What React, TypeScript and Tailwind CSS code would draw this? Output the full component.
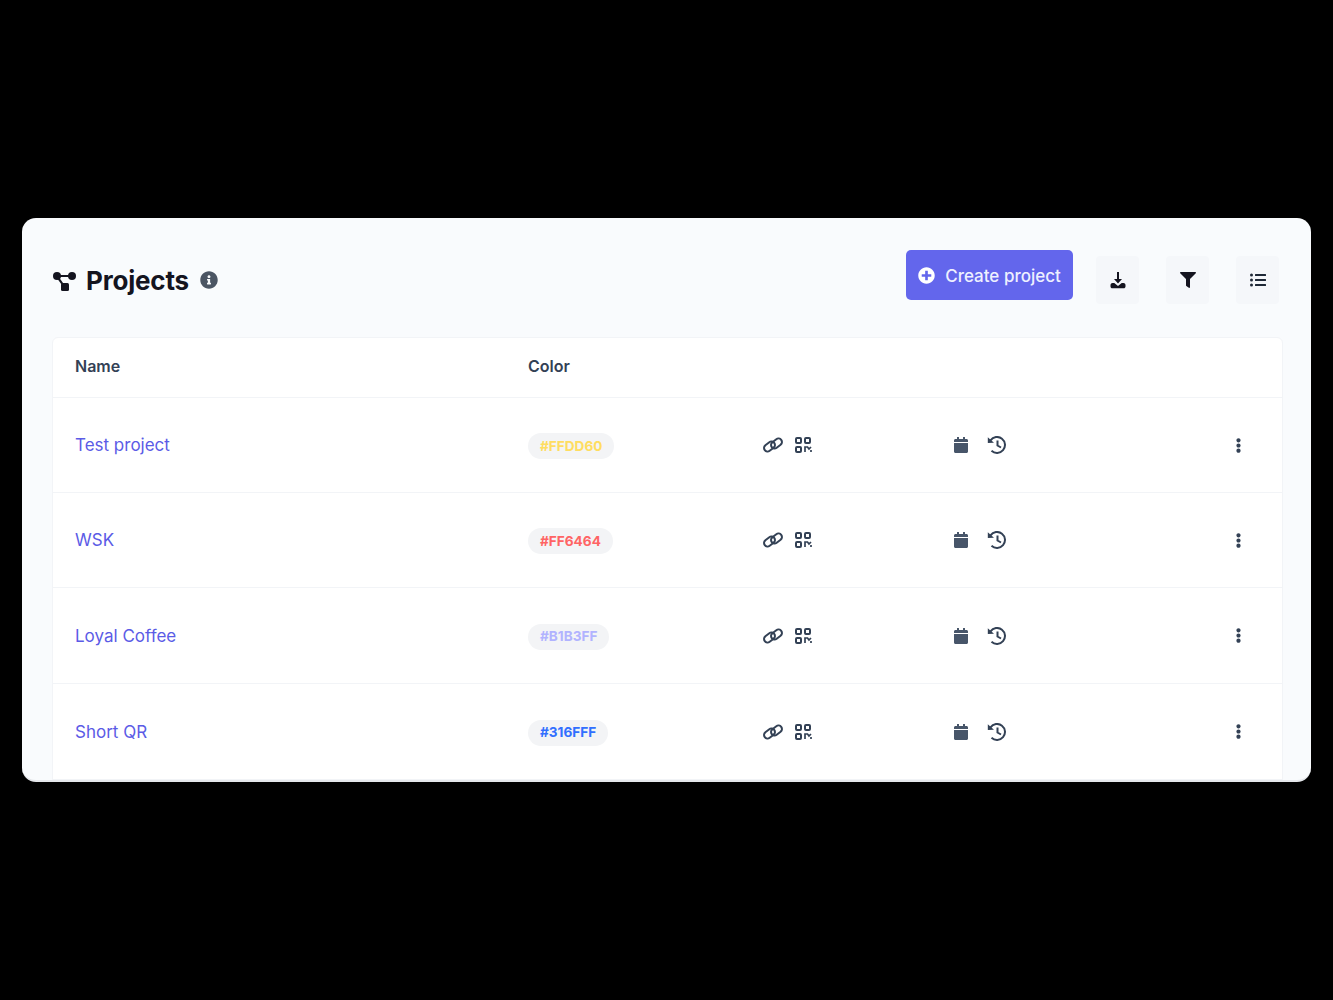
import React from 'react';
import { FaCalendar, FaEllipsisV, FaFilter, FaInfoCircle, FaListUl, FaPlusCircle } from 'react-icons/fa';

const projects = [
  { name: 'Test project', color: '#FFDD60', text: 'text-[#FFDD60]', height: 'h-[95px]' },
  { name: 'WSK', color: '#FF6464', text: 'text-[#FF6464]', height: 'h-[95px]' },
  { name: 'Loyal Coffee', color: '#B1B3FF', text: 'text-[#B1B3FF]', height: 'h-[96px]' },
  { name: 'Short QR', color: '#316FFF', text: 'text-[#316FFF]', height: 'h-[96px]' },
];

const ProjectsIcon = () => (
  <svg width="24" height="22" viewBox="0 0 24 22" fill="#14141f">
    <circle cx="5" cy="6" r="4" />
    <circle cx="20" cy="6" r="4" />
    <rect x="9" y="13" width="8" height="8" rx="1.500" />
    <path d="M5 5h15v2H5z" />
    <path d="M6 6l6.500 9-1.700 1.200-6.500-9z" />
  </svg>
);

const DownloadIcon = () => (
  <svg width="16" height="17" viewBox="0 0 16 17" fill="#14141f">
    <path d="M7 0h2v7h3l-4 4.400L4 7h3z" />
    <path d="M0.500 13c0-1.200 1-2 2-2h1.800L8 14l3.700-3h1.800c1 0 2 .8 2 2v1.500c0 1-.8 1.800-1.800 1.800H2.300c-1 0-1.800-.8-1.800-1.800z" />
  </svg>
);

const LinkIcon = () => (
  <svg width="22" height="16" viewBox="0 0 22 16" fill="none" stroke="#334155" strokeWidth="2">
    <rect x="1.500" y="6" width="12" height="7" rx="3.500" transform="rotate(-38 7.500 9.500)" />
    <rect x="8.500" y="3" width="12" height="7" rx="3.500" transform="rotate(-38 14.500 6.500)" />
  </svg>
);

const QrIcon = () => (
  <svg width="17" height="16" viewBox="0 0 17 16" fill="none" stroke="#334155" strokeWidth="2">
    <rect x="1" y="1" width="5" height="5" rx="1" />
    <rect x="10" y="1" width="5" height="5" rx="1" />
    <rect x="1" y="10" width="5" height="5" rx="1" />
    <path d="M10 15v-5h2.500l1.500 2 2-2M16 13v2" strokeWidth="1.700" />
  </svg>
);

const HistoryIcon = () => (
  <svg width="19" height="18" viewBox="0 0 19 18" fill="none" stroke="#334155" strokeWidth="2">
    <path d="M3.500 4.300A8 8 0 1 1 4.500 14.800" />
    <path d="M0.800 1.200l6.200 5.500L0.800 7z" fill="#334155" stroke="none" />
    <path d="M10.500 4.500v5l3.500 2" />
  </svg>
);

const IconButton = ({ children }: { children: React.ReactNode }) => (
  <button className="flex h-[48px] w-[43px] items-center justify-center rounded bg-[#f5f7fa] text-[#14141f]">
    {children}
  </button>
);

export default function App() {
  return (
    <div className="min-h-[1000px] bg-black pt-[218px] font-['Inter',sans-serif]">
      <div className="mx-[22px] h-[564px] overflow-hidden rounded-[14px] border-b-2 border-[#e5e7eb] bg-[#f9fbfd] px-[30px] pt-[32px]">
        <div className="flex h-[88px] items-start justify-between pr-[2px]">
          <div className="flex items-center pt-[13px]">
            <ProjectsIcon />
            <h1 className="ml-[10px] text-[26px] leading-[36px] font-bold tracking-[-0.2px] text-[#14141f]">Projects</h1>
            <FaInfoCircle className="ml-[11px] -translate-y-px text-[#4b5563]" size={18} />
          </div>
          <div className="flex items-start">
            <button className="flex h-[50px] w-[167px] items-center justify-center gap-[10px] rounded-[5px] bg-[#6366ec] text-[17px] font-medium text-[#eef0ff]">
              <FaPlusCircle size={17} className="text-white" />
              <span className="translate-y-[2px]">Create project</span>
            </button>
            <div className="ml-[23px] flex gap-[27px] pt-[6px]">
              <IconButton><DownloadIcon /></IconButton>
              <IconButton><FaFilter size={16} /></IconButton>
              <IconButton><FaListUl size={16} className="text-[#1f2937]" /></IconButton>
            </div>
          </div>
        </div>
        <div className="-mt-px -mr-[2px] rounded-t-md border border-[#f2f4f7] bg-white">
          <div className="grid h-[60px] grid-cols-[453px_1fr] items-center border-b border-[#f2f4f7] pl-[22px] text-[16px] font-semibold text-[#334155]">
            <span className="-translate-y-[2px]">Name</span>
            <span className="-translate-y-[2px]">Color</span>
          </div>
          {projects.map((p) => (
            <div
              key={p.name}
              className={`grid grid-cols-[453px_234px_191px_1fr_46px] items-center border-b border-[#f2f4f7] pl-[22px] ${p.height}`}
            >
              <a className="translate-y-[1px] text-[17px] text-[#5b5be6]">{p.name}</a>
              <div>
                <span className={`inline-flex h-[26px] translate-y-px items-center rounded-full bg-[#f3f4f6] px-[12px] text-[13.600px] font-bold ${p.text}`}>
                  {p.color}
                </span>
              </div>
              <div className="flex items-center gap-[11px]">
                <LinkIcon />
                <QrIcon />
              </div>
              <div className="flex items-center gap-[18px] text-[#475569]">
                <FaCalendar size={16} />
                <HistoryIcon />
              </div>
              <FaEllipsisV size={15} className="-translate-x-[5px] text-[#334155]" />
            </div>
          ))}
        </div>
      </div>
    </div>
  );
}
